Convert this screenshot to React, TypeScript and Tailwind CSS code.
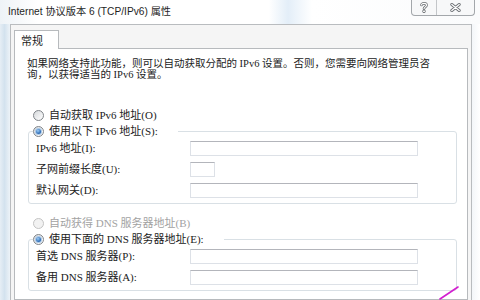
import React from "react";

const bodyFont = "font-['Liberation_Serif','Noto_Sans_CJK_SC',serif]";

function Radio({ checked, disabled }: { checked?: boolean; disabled?: boolean }) {
  return (
    <span
      className={
        disabled
          ? "flex h-[11px] w-[11px] shrink-0 items-center justify-center rounded-full border border-[#c4c4c4] bg-[#f2f2f2]"
          : "flex h-[11px] w-[11px] shrink-0 items-center justify-center rounded-full border border-[#7f8489] bg-[linear-gradient(135deg,#d6d9dc,#ffffff)]"
      }
    >
      {checked && (
        <span className="h-[5px] w-[5px] rounded-full bg-[radial-gradient(circle_at_40%_35%,#9ccdf7,#1c5dac_75%)] shadow-[0_0_0_1px_#a9c8e8]" />
      )}
    </span>
  );
}

function Field({ label, short }: { label: string; short?: boolean }) {
  return (
    <div className="flex h-[21px] items-center pl-[7px]">
      <span className="w-[154px] whitespace-nowrap">{label}</span>
      <input
        readOnly
        className={
          short
            ? "h-[15px] w-[25px] border border-[#dde1e7] border-t-[#b3b5bb] bg-white outline-none"
            : "h-[15px] w-[228px] border border-[#dde1e7] border-t-[#b3b5bb] bg-white outline-none"
        }
      />
    </div>
  );
}

function Group({ legend, children }: { legend: string; children: React.ReactNode }) {
  return (
    <fieldset className="mt-[2px] ml-[13px] mr-[10px] rounded-[3px] border border-[#d9e0e5] pb-[2px]">
      <legend className="ml-[4px] pr-[20px]">
        <span className="flex h-[14px] items-center gap-[5px] bg-white">
          <Radio checked />
          <span className="whitespace-nowrap">{legend}</span>
        </span>
      </legend>
      {children}
    </fieldset>
  );
}

export default function App() {
  return (
    <div className="relative flex h-[300px] w-[480px] flex-col overflow-hidden bg-white">
      {/* title bar */}
      <div className="flex h-[24px] shrink-0 items-center bg-[linear-gradient(90deg,#eef3f7_0%,#ffffff_8%,#ffffff_56%,#e3eef8_60%,#ffffff_65%,#fafbfc_100%)] pl-[8px] font-['Liberation_Sans','Noto_Sans_CJK_SC',sans-serif] text-[10.2px] text-[#1f1f1f]">
        Internet 协议版本 6 (TCP/IPv6) 属性
      </div>

      {/* help / close */}
      <div className="absolute top-0 right-[5px] flex h-[16px] w-[64px] rounded-b-[4px] border border-t-0 border-[#a3a7ab] bg-[#f7f8f9]">
        <div className="flex w-[25px] items-center justify-center border-r border-[#c3c6c9]">
          <svg width="8" height="11" viewBox="0 0 8 11">
            <path d="M1.5 3 C1.5 0.8 6.5 0.8 6.5 3.2 C6.5 4.8 4 5 4 6.8" fill="none" stroke="#6b6f73" strokeWidth="2.6" strokeLinecap="round" />
            <path d="M1.5 3 C1.5 0.8 6.5 0.8 6.5 3.2 C6.5 4.8 4 5 4 6.8" fill="none" stroke="#ffffff" strokeWidth="1.1" strokeLinecap="round" />
            <circle cx="4" cy="9.3" r="1.4" fill="#ffffff" stroke="#6b6f73" strokeWidth="0.9" />
          </svg>
        </div>
        <div className="flex flex-1 items-center justify-center">
          <svg width="11" height="9" viewBox="0 0 11 9">
            <path d="M1.8 1.5 L9.2 7.5 M9.2 1.5 L1.8 7.5" stroke="#6b6f73" strokeWidth="3" strokeLinecap="round" />
            <path d="M1.8 1.5 L9.2 7.5 M9.2 1.5 L1.8 7.5" stroke="#ffffff" strokeWidth="1.3" strokeLinecap="round" />
          </svg>
        </div>
      </div>

      <div className="flex min-h-0 flex-1">
        {/* left glass */}
        <div className="w-[10px] shrink-0 bg-[linear-gradient(90deg,#e6eef5,#d3e2ee_45%,#edf3f8)]" />

        {/* dialog */}
        <div className="flex w-[462px] shrink-0 flex-col border-t border-r border-l border-[#b9bcbf] bg-[#f5f5f5] pt-[5px] pr-[3px] pl-[3px]">
          <div className="relative z-10 -mb-px flex h-[19px] w-[45px] items-center border border-b-0 border-[#b7babd] bg-white pl-[6px] font-['Noto_Sans_CJK_SC',sans-serif] text-[11px] text-[#1c1c1c]">
            常规
          </div>
          <div className={`flex flex-1 flex-col border border-[#b7babd] bg-white text-[11px] text-[#222222] ${bodyFont}`}>
            <div className="pt-[10px] pl-[12px] text-[10.5px] leading-[10.5px]">
              <div className="whitespace-nowrap">如果网络支持此功能，则可以自动获取分配的 IPv6 设置。否则，您需要向网络管理员咨</div>
              <div className="whitespace-nowrap">询，以获得适当的 IPv6 设置。</div>
            </div>

            <div className="mt-[28px] flex h-[14px] items-center gap-[5px] pl-[18px]">
              <Radio />
              <span>自动获取 IPv6 地址(O)</span>
            </div>

            <Group legend="使用以下 IPv6 地址(S):">
              <Field label="IPv6 地址(I):" />
              <Field label="子网前缀长度(U):" short />
              <Field label="默认网关(D):" />
            </Group>

            <div className="mt-[12px] flex h-[14px] items-center gap-[5px] pl-[18px] text-[#a2a2a2]">
              <Radio disabled />
              <span>自动获得 DNS 服务器地址(B)</span>
            </div>

            <Group legend="使用下面的 DNS 服务器地址(E):">
              <Field label="首选 DNS 服务器(P):" />
              <Field label="备用 DNS 服务器(A):" />
            </Group>
          </div>
        </div>

        {/* right glass */}
        <div className="flex-1 bg-[linear-gradient(90deg,#f3f6f9,#ffffff)]" />
      </div>

      {/* annotation stroke */}
      <svg className="pointer-events-none absolute top-[286px] left-[438px]" width="22" height="14" viewBox="0 0 22 14">
        <path d="M20 1 L2 13" stroke="#d21fd0" strokeWidth="1.6" strokeLinecap="round" />
      </svg>
    </div>
  );
}
